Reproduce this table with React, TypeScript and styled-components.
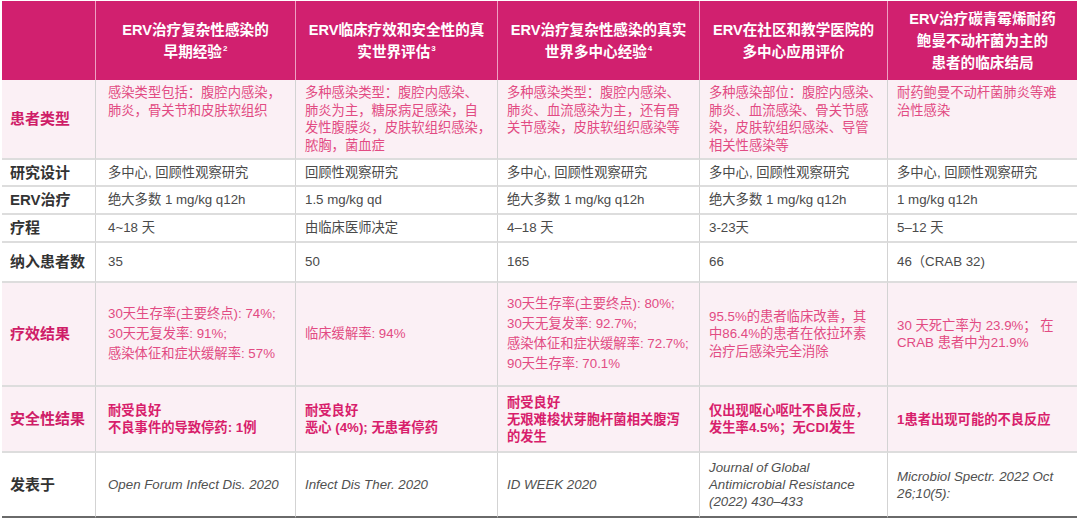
import React from "react";
import styled, { createGlobalStyle, css } from "styled-components";

const Global = createGlobalStyle`
  html, body { margin: 0; padding: 0; background: #ffffff; }
  body { font-family: "Liberation Sans", "Noto Sans CJK SC", sans-serif; }
`;

const Page = styled.div`
  padding: 1px 3px 0 2px;
  width: 1080px;
  height: 520px;
  box-sizing: border-box;
  overflow: hidden;
`;

const Table = styled.div`
  display: grid;
  grid-template-columns: 94px 200px 202px 202px 188px 189px;
  grid-template-rows: 79px 80px 27px 28px 28px 40px 104px 66px 65px;
`;

type Tone = "head" | "pink" | "white";
type VAlign = "top" | "middle";

const Cell = styled.div<{ $tone: Tone; $v?: VAlign; $last?: boolean; $first?: boolean }>`
  box-sizing: border-box;
  display: flex;
  flex-direction: column;
  justify-content: ${(p) => (p.$v === "top" ? "flex-start" : "center")};
  padding: ${(p) => (p.$v === "top" ? "4px 6px 0 9px" : "0 6px 0 9px")};
  padding-left: ${(p) => (p.$first ? "12px" : "9px")};
  font-size: 13.3px;
  line-height: 17.5px;
  white-space: nowrap;
  ${(p) =>
    p.$tone === "head"
      ? css`
          background: #d1206f;
          color: #ffffff;
          border-right: 1px solid #ee9fc2;
          font-weight: bold;
          font-size: 14.6px;
          line-height: 22px;
          align-items: center;
          text-align: center;
          padding: 0 4px;
        `
      : css`
          background: ${p.$tone === "pink" ? "#fbf0f5" : "#ffffff"};
          color: ${p.$tone === "pink" ? "#e24b83" : "#4a4a4a"};
          border-right: 1px solid #d3d3d3;
          border-bottom: ${p.$last ? "2px solid #6a6a6a" : "2px solid #dddddd"};
        `}
  &:nth-child(6n) {
    border-right: none;
  }
`;

const Label = styled(Cell)<{ $accent?: boolean }>`
  padding-left: 8px;
  font-size: 15px;
  font-weight: bold;
  color: ${(p) => (p.$accent ? "#cf1d68" : "#333333")};
`;

const HeadLine = styled.span`
  display: block;
`;

const Sup = styled.sup`
  font-size: 8px;
  line-height: 0;
  vertical-align: 6px;
  margin-left: 1px;
`;

const Line = styled.span<{ $gap?: number }>`
  display: block;
  line-height: ${(p) => (p.$gap ? `${p.$gap}px` : "inherit")};
`;

const Strong = styled.div`
  font-weight: bold;
  color: #d81e6c;
  line-height: 17px;
`;

const Italic = styled.div`
  font-style: italic;
  color: #505050;
  line-height: 17px;
`;

const lines = (arr: string[], gap?: number) =>
  arr.map((t, i) => (
    <Line key={i} $gap={gap}>
      {t}
    </Line>
  ));

const headers: { lines: string[]; sup?: string }[] = [
  { lines: ["ERV治疗复杂性感染的", "早期经验"], sup: "2" },
  { lines: ["ERV临床疗效和安全性的真", "实世界评估"], sup: "3" },
  { lines: ["ERV治疗复杂性感染的真实", "世界多中心经验"], sup: "4" },
  { lines: ["ERV在社区和教学医院的", "多中心应用评价"] },
  { lines: ["ERV治疗碳青霉烯耐药", "鲍曼不动杆菌为主的", "患者的临床结局"] },
];

const patients = [
  ["感染类型包括：腹腔内感染，", "肺炎，骨关节和皮肤软组织"],
  ["多种感染类型：腹腔内感染、", "肺炎为主，糖尿病足感染，自", "发性腹膜炎，皮肤软组织感染，", "脓胸，菌血症"],
  ["多种感染类型：腹腔内感染、", "肺炎、血流感染为主，还有骨", "关节感染，皮肤软组织感染等"],
  ["多种感染部位：腹腔内感染、", "肺炎、血流感染、骨关节感", "染，皮肤软组织感染、导管", "相关性感染等"],
  ["耐药鲍曼不动杆菌肺炎等难", "治性感染"],
];

const simpleRows: { label: string; values: string[] }[] = [
  {
    label: "研究设计",
    values: ["多中心, 回顾性观察研究", "回顾性观察研究", "多中心, 回顾性观察研究", "多中心, 回顾性观察研究", "多中心, 回顾性观察研究"],
  },
  {
    label: "ERV治疗",
    values: ["绝大多数 1 mg/kg q12h", "1.5 mg/kg qd", "绝大多数 1 mg/kg q12h", "绝大多数 1 mg/kg q12h", "1 mg/kg q12h"],
  },
  { label: "疗程", values: ["4~18 天", "由临床医师决定", "4–18 天", "3-23天", "5–12 天"] },
  { label: "纳入患者数", values: ["35", "50", "165", "66", "46（CRAB 32)"] },
];

const efficacy = [
  ["30天生存率(主要终点): 74%;", "30天无复发率: 91%;", "感染体征和症状缓解率: 57%"],
  ["临床缓解率: 94%"],
  ["30天生存率(主要终点): 80%;", "30天无复发率: 92.7%;", "感染体征和症状缓解率: 72.7%;", "90天生存率: 70.1%"],
  ["95.5%的患者临床改善，其", "中86.4%的患者在依拉环素", "治疗后感染完全消除"],
  ["30 天死亡率为 23.9%； 在", "CRAB 患者中为21.9%"],
];

const safety = [
  ["耐受良好", "不良事件的导致停药: 1例"],
  ["耐受良好", "恶心 (4%); 无患者停药"],
  ["耐受良好", "无艰难梭状芽胞杆菌相关腹泻", "的发生"],
  ["仅出现呕心呕吐不良反应，", "发生率4.5%；无CDI发生"],
  ["1患者出现可能的不良反应"],
];

const published = [
  ["Open Forum Infect Dis. 2020"],
  ["Infect Dis Ther. 2020"],
  ["ID WEEK 2020"],
  ["Journal of Global", "Antimicrobial Resistance", "(2022) 430–433"],
  ["Microbiol Spectr. 2022 Oct", "26;10(5):"],
];

export default function App() {
  return (
    <Page>
      <Global />
      <Table>
        <Cell $tone="head" />
        {headers.map((h, i) => (
          <Cell key={`h${i}`} $tone="head">
            {h.lines.map((l, j) => (
              <HeadLine key={j}>
                {l}
                {h.sup && j === h.lines.length - 1 ? <Sup>{h.sup}</Sup> : null}
              </HeadLine>
            ))}
          </Cell>
        ))}

        <Label $tone="pink" $accent>
          患者类型
        </Label>
        {patients.map((p, i) => (
          <Cell key={`p${i}`} $tone="pink" $v="top" $first={i === 0}>
            {lines(p)}
          </Cell>
        ))}

        {simpleRows.map((r) => (
          <React.Fragment key={r.label}>
            <Label $tone="white">{r.label}</Label>
            {r.values.map((v, i) => (
              <Cell key={i} $tone="white" $first={i === 0}>
                {v}
              </Cell>
            ))}
          </React.Fragment>
        ))}

        <Label $tone="pink" $accent>
          疗效结果
        </Label>
        {efficacy.map((e, i) => (
          <Cell key={`e${i}`} $tone="pink" $first={i === 0}>
            {lines(e, i === 3 || i === 4 ? 17.5 : 20)}
          </Cell>
        ))}

        <Label $tone="pink" $accent>
          安全性结果
        </Label>
        {safety.map((s, i) => (
          <Cell key={`s${i}`} $tone="pink" $first={i === 0}>
            <Strong>{lines(s)}</Strong>
          </Cell>
        ))}

        <Label $tone="white" $last>
          发表于
        </Label>
        {published.map((p, i) => (
          <Cell key={`pub${i}`} $tone="white" $last $first={i === 0}>
            <Italic>{lines(p)}</Italic>
          </Cell>
        ))}
      </Table>
    </Page>
  );
}
